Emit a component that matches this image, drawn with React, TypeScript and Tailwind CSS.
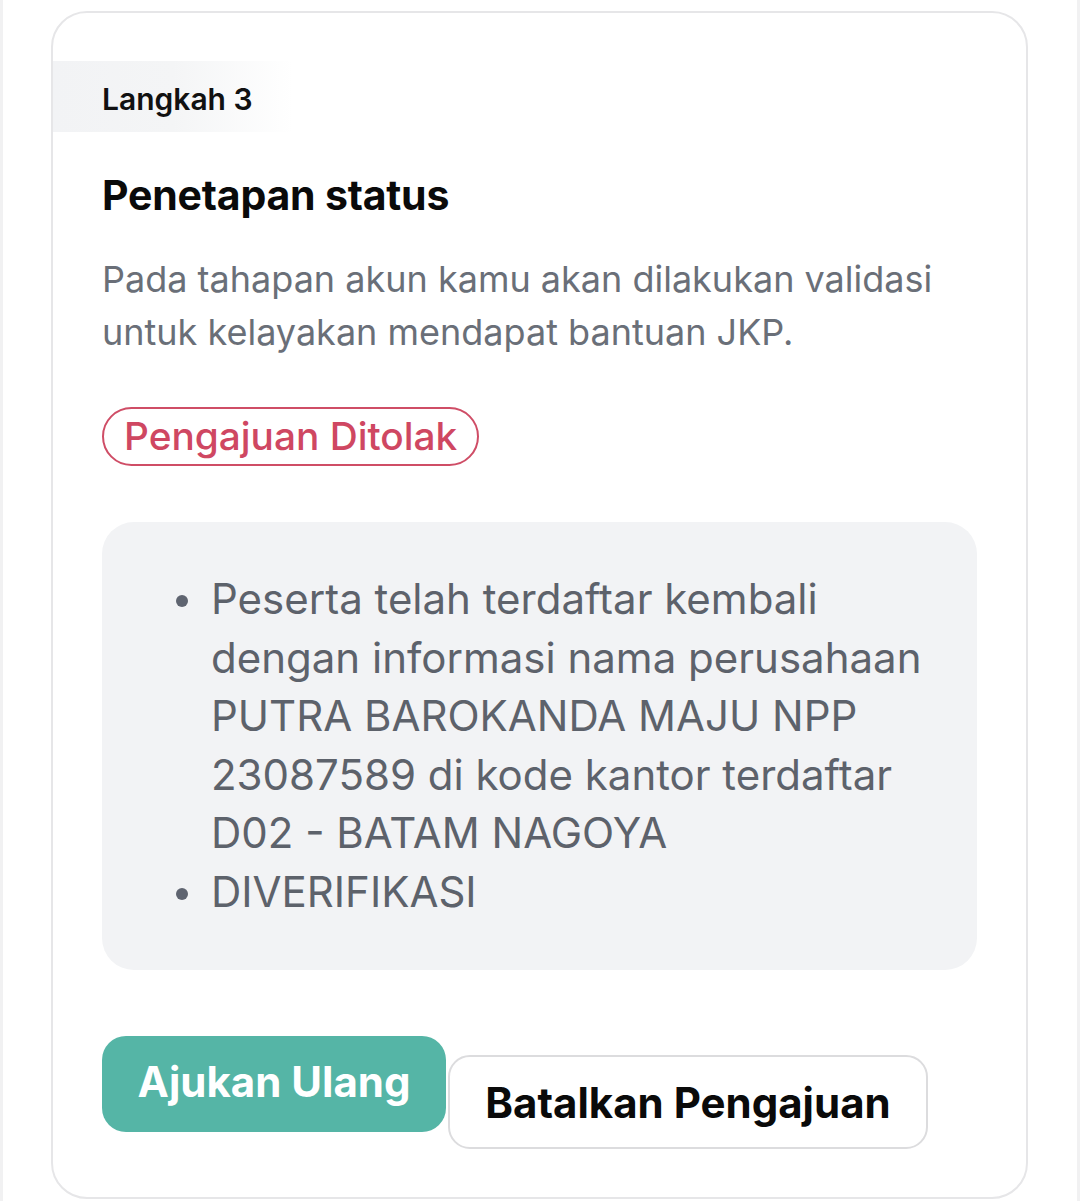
import React from "react";

export default function App() {
  return (
    <div
      className="w-[1080px] h-[1201px] overflow-hidden bg-white border-l-[3px] border-r-[3px] border-[#f1f1f2] pl-[48px] pt-[11px]"
      style={{ fontFamily: "Inter, 'Noto Sans', sans-serif" }}
    >
      <div className="w-[977px] h-[1188px] rounded-[36px] border-2 border-[#e6e6e8] bg-white pt-[48px] px-[49px]">
        <div className="-ml-[49px] w-[240px] h-[71px] bg-gradient-to-r from-[#f2f3f5] via-[#f4f5f6] to-white pl-[49px] pt-[4px] flex items-center">
          <span className="text-[30px] font-semibold text-[#111111] leading-none">Langkah 3</span>
        </div>
        <h2 className="mt-[40px] text-[41px] font-bold text-[#0a0a0a] leading-[46px] tracking-[-0.2px]">
          Penetapan status
        </h2>
        <p className="mt-[35px] text-[36px] text-[#6a6f78] leading-[53px] w-[875px]">
          Pada tahapan akun kamu akan dilakukan validasi untuk kelayakan mendapat bantuan JKP.
        </p>
        <div className="mt-[48px] inline-flex items-center h-[59px] rounded-full border-2 border-[#cf4d66] px-[20px]">
          <span className="text-[38.8px] font-medium text-[#cf4762] leading-none">Pengajuan Ditolak</span>
        </div>
        <div className="mt-[56px] w-[875px] h-[448px] rounded-[32px] bg-[#f2f3f5] pl-[74px] pr-[30px] pt-[48px]">
          <div className="flex flex-col text-[42px] leading-[58.6px] text-[#5d626b]">
            <div className="flex">
              <span className="w-[12px] h-[12px] rounded-full bg-[#5f6470] mt-[25px] mr-[23px] shrink-0" />
              <span>
                Peserta telah terdaftar kembali dengan informasi nama perusahaan PUTRA BAROKANDA MAJU NPP 23087589 di kode kantor terdaftar D02 - BATAM NAGOYA
              </span>
            </div>
            <div className="flex">
              <span className="w-[12px] h-[12px] rounded-full bg-[#5f6470] mt-[25px] mr-[23px] shrink-0" />
              <span>DIVERIFIKASI</span>
            </div>
          </div>
        </div>
        <div className="mt-[66px] flex items-start gap-[2px]">
          <button className="w-[344px] h-[96px] rounded-[24px] bg-[#55b5a6] text-white text-[42px] font-bold pb-[6px]">
            Ajukan Ulang
          </button>
          <button className="mt-[19px] w-[480px] h-[94px] rounded-[22px] border-2 border-[#dcdcde] bg-white text-[#0a0a0a] text-[42px] font-bold">
            Batalkan Pengajuan
          </button>
        </div>
      </div>
    </div>
  );
}
